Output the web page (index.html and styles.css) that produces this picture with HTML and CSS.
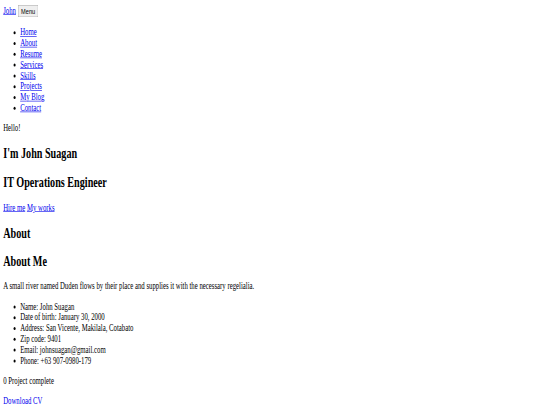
FILE: index.html
```html
<!DOCTYPE html>
<html lang="en">
<head>
<meta charset="utf-8">
<title>John Suagan</title>
<link rel="stylesheet" href="styles.css">
</head>
<body>
<div class="page">
  <nav class="nav">
    <a href="#" class="brand">John</a>
    <button class="menu-btn" type="button">Menu</button>
    <ul class="nav-list">
      <li><a href="#">Home</a></li>
      <li><a href="#">About</a></li>
      <li><a href="#">Resume</a></li>
      <li><a href="#">Services</a></li>
      <li><a href="#">Skills</a></li>
      <li><a href="#">Projects</a></li>
      <li><a href="#">My Blog</a></li>
      <li><a href="#">Contact</a></li>
    </ul>
  </nav>
  <section class="hero">
    <div class="greet">Hello!</div>
    <h2>I'm John Suagan</h2>
    <h2>IT Operations Engineer</h2>
    <p><a href="#">Hire me</a> <a href="#">My works</a></p>
  </section>
  <section class="about">
    <h2>About</h2>
    <h2>About Me</h2>
    <p>A small river named Duden flows by their place and supplies it with the necessary regelialia.</p>
    <ul>
      <li>Name: John Suagan</li>
      <li>Date of birth: January 30, 2000</li>
      <li>Address: San Vicente, Makilala, Cotabato</li>
      <li>Zip code: 9401</li>
      <li>Email: johnsuagan@gmail.com</li>
      <li>Phone: +63 907-0980-179</li>
    </ul>
    <p><span class="number">0</span> Project complete</p>
    <p><a href="#">Download CV</a></p>
  </section>
</div>
</body>
</html>
```
FILE: styles.css
```css
html, body {
  margin: 0;
  padding: 0;
  overflow: hidden;
  background: #fff;
}
.page {
  width: 1260px;
  padding: 8px 8px 8px 7.6px;
  font-family: "Liberation Serif", "Times New Roman", serif;
  font-size: 16px;
  color: #000;
  transform: scale(0.423, 0.6);
  transform-origin: 0 0;
}
a {
  color: #0000ee;
}
.menu-btn {
  font-family: "Liberation Sans", Arial, sans-serif;
  font-size: 13.33px;
}
```
